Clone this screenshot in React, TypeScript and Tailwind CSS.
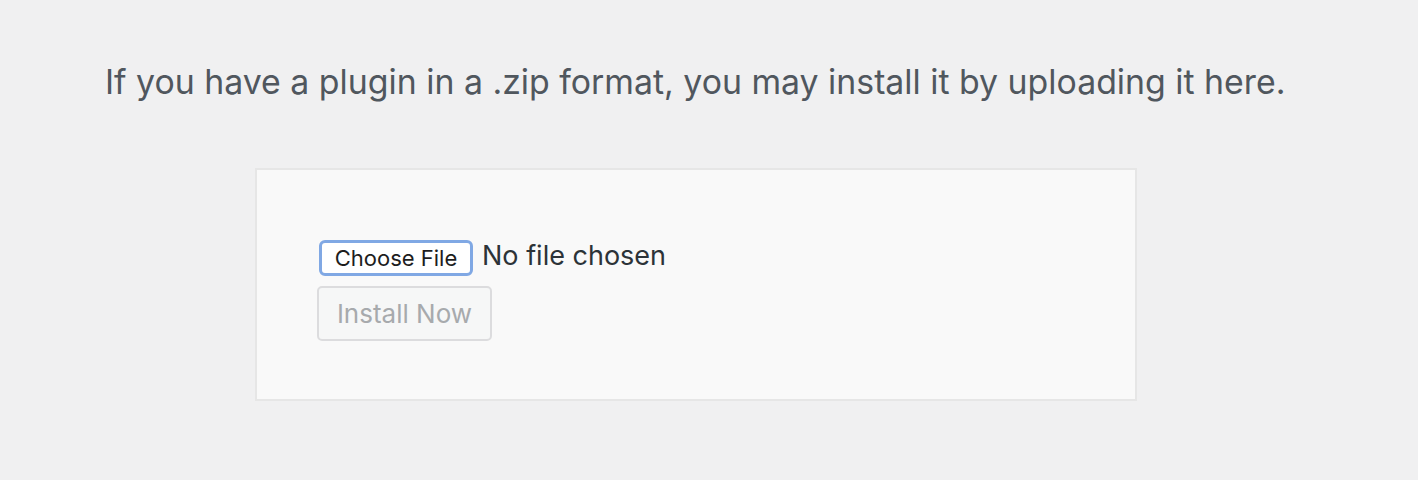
export default function App() {
  return (
    <div className="w-[1418px] h-[480px] bg-[#f0f0f1] overflow-hidden" style={{ fontFamily: "Inter, 'Noto Sans', sans-serif" }}>
      <p className="pt-[60px] pl-[105px] text-[33.85px] leading-[44px] text-[#50575e] whitespace-nowrap">
        If you have a plugin in a .zip format, you may install it by uploading it here.
      </p>
      <div className="ml-[255px] mt-[64px] w-[882px] h-[233px] border-2 border-[#e6e6e6] bg-[#f9f9f9] pt-[70px] pl-[62px]">
        <div className="flex items-center gap-[9px]">
          <div className="w-[154px] h-[36px] rounded-[6px] border-[3px] border-[#80a8e4] bg-white flex items-center justify-center text-[22px] text-[#1d1d1d]">
            Choose File
          </div>
          <span className="text-[27px] text-[#2c3338] -mt-[4px]">No file chosen</span>
        </div>
        <div className="mt-[9px] -ml-[2px] w-[175px] h-[55px] rounded-[5px] border-2 border-[#dcdcde] bg-[#f6f7f7] flex items-center justify-center text-[26px] text-[#a7aaad]">
          Install Now
        </div>
      </div>
    </div>
  );
}
